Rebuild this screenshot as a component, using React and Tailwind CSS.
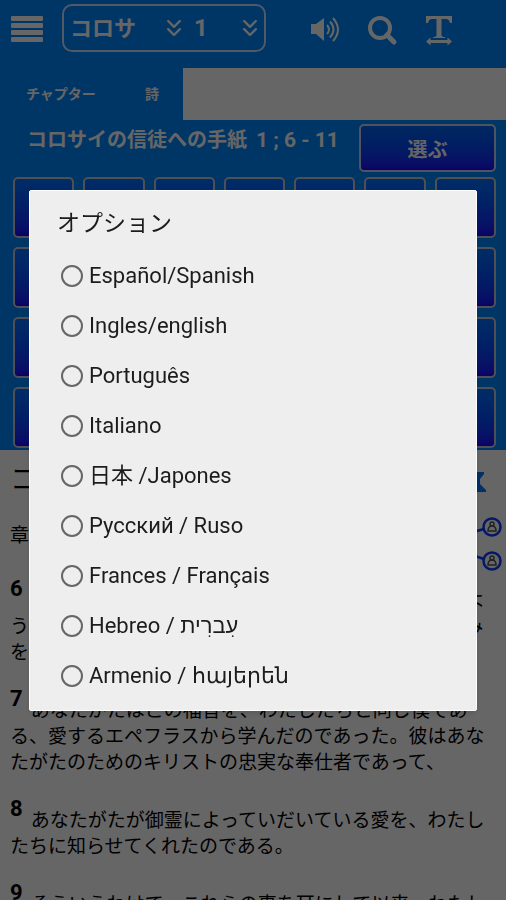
import { ChevronsDown } from "lucide-react";

const LANGUAGES = [
  "Español/Spanish",
  "Ingles/english",
  "Português",
  "Italiano",
  "日本 /Japones",
  "Русский / Ruso",
  "Frances / Français",
  "Hebreo / עִברִית",
  "Armenio / հայերեն",
];

const VERSES = [
  { n: 6, text: "そして、この福音は、世界中いたる所でそうであるように、あなたがたのところでも、これを聞いて神の恵みを知ったとき以来、実を結んで成長している。" },
  { n: 7, text: "あなたがたはこの福音を、わたしたちと同じ僕である、愛するエペフラスから学んだのであった。彼はあなたがたのためのキリストの忠実な奉仕者であって、" },
  { n: 8, text: "あなたがたが御霊によっていだいている愛を、わたしたちに知らせてくれたのである。" },
  { n: 9, text: "そういうわけで、これらの事を耳にして以来、わたし" },
];

const CELLS = Array.from({ length: 28 }, (_, i) => i + 1);

function Header() {
  return (
    <header className="flex h-[68px] items-start pl-[11px] text-white">
      <button aria-label="Menu" className="mt-4 flex w-8 flex-col gap-[2px]">
        <span className="h-[5px] rounded-[1px] bg-white" />
        <span className="h-[5px] rounded-[1px] bg-white" />
        <span className="h-[5px] rounded-[1px] bg-white" />
        <span className="h-[5px] rounded-[1px] bg-white" />
      </button>
      <div className="mt-1 ml-[19px] flex h-12 w-[204px] items-center rounded-[10px] border-2 border-[#d0dcff] pl-[6px]">
        <div className="relative flex w-[124px] items-center">
          <select aria-label="Book" className="w-full appearance-none bg-transparent text-[22px] font-bold outline-none">
            <option>コロサ</option>
          </select>
          <ChevronsDown className="pointer-events-none absolute right-[6px] size-7" strokeWidth={2} />
        </div>
        <div className="relative flex flex-1 items-center">
          <select aria-label="Chapter" className="w-full appearance-none bg-transparent text-2xl font-bold outline-none">
            <option>1</option>
          </select>
          <ChevronsDown className="pointer-events-none absolute right-0 size-7" strokeWidth={2} />
        </div>
      </div>
      <button aria-label="Listen" className="mt-4 ml-[45px]">
        <svg width="30" height="28" viewBox="0 0 30 28" fill="none" stroke="white" strokeWidth="2">
          <path d="M0 8h5l8-6v23l-8-7H0z" fill="white" stroke="none" />
          <path d="M16 9q4 4.500 0 9M19 5.500q7 8 0 16M22 2q10 11.500 0 23" />
        </svg>
      </button>
      <button aria-label="Search" className="mt-4 ml-[27px]">
        <svg width="30" height="30" viewBox="0 0 30 30" fill="none" stroke="white">
          <circle cx="12" cy="12" r="10" strokeWidth="4" />
          <path d="M19 19l7 7" strokeWidth="5" strokeLinecap="round" />
        </svg>
      </button>
      <button aria-label="Text size" className="mt-4 ml-[27px]">
        <svg width="30" height="30" viewBox="0 0 30 30" fill="white">
          <path d="M1 0h26v7h-2q-1-4-4-4h-4.500v16q0 2 3.500 2v1H8v-1q3.500 0 3.500-2V3H7Q4 3 3 7H1z" />
          <path d="M1 25.500l4.500-4v2.500h17v-2.500l4.500 4-4.500 4V27h-17v2.500z" />
        </svg>
      </button>
    </header>
  );
}

function ArticleMarks() {
  return (
    <svg width="40" height="110" viewBox="0 0 40 110" fill="none" className="shrink-0">
      <path d="M0 7h18v2l-4 5v5l6 6v2H0z" fill="#0078ff" />
      <g stroke="#0a3cff" strokeWidth="2.500">
        <path d="M4 70l7-4 7-2M4 89l8 3 6 2" />
        <circle cx="26" cy="62" r="8.500" />
        <circle cx="26" cy="96" r="8.500" />
      </g>
      <g stroke="#555" strokeWidth="1.500">
        <circle cx="26" cy="59" r="2" />
        <path d="M22 66q0-5 4-5t4 5z" />
        <circle cx="26" cy="93" r="2" />
        <path d="M22 100q0-5 4-5t4 5z" />
      </g>
    </svg>
  );
}

function OptionsDialog() {
  return (
    <div className="fixed inset-0 flex items-center justify-center bg-black/60 px-[29px]">
      <form
        role="dialog"
        aria-labelledby="options-title"
        className="w-full rounded-[2px] border border-white bg-[#eeeeee] px-[27px] pb-[9px] shadow-md"
      >
        <h2 id="options-title" className="flex h-[60px] items-center pt-2 text-[23px] text-[#1c1c1c]">オプション</h2>
        {LANGUAGES.map((name) => (
          <label key={name} className="flex h-[50px] items-center gap-[6px] pl-1 text-[22px] text-[#1c1c1c]">
            <input
              type="radio"
              name="language"
              className="size-[22px] shrink-0 appearance-none rounded-full border-2 border-[#666666] checked:border-[6px]"
            />
            <span>{name}</span>
          </label>
        ))}
      </form>
    </div>
  );
}

export default function App() {
  return (
    <div lang="ja" className="flex h-screen flex-col overflow-hidden bg-white font-[Roboto,'Noto_Sans_CJK_JP','Noto_Sans',sans-serif]">
      <div className="shrink-0 bg-[#0087ff] pb-[2px]">
        <Header />
        <nav className="flex h-[52px] text-sm font-bold text-white">
          <div className="flex w-[183px] items-center gap-[49px] pl-[26px]">
            <button>チャプター</button>
            <button>詩</button>
          </div>
          <div className="flex-1 bg-white" />
        </nav>
        <div className="flex h-[57px] items-start justify-between pt-1 pr-[10px] pl-[27px] text-white">
          <h1 className="pt-[2px] text-xl font-bold">
            コロサイの信徒への手紙 <span className="ml-1 text-[21px]">1 ; 6 - 11</span>
          </h1>
          <button className="h-12 w-[137px] rounded-[5px] border-2 border-[#c8d2f5] bg-linear-to-b from-[#0064f0] to-[#1c00ff] pt-1 text-xl font-bold">
            選ぶ
          </button>
        </div>
        <div className="grid grid-cols-7 gap-[9px] pr-[10px] pl-[13px]">
          {CELLS.map((n) => (
            <button
              key={n}
              aria-label={`${n}`}
              className="h-[61px] rounded-[5px] border-2 border-[#c8c8d2] bg-linear-to-b from-[#0070ff] to-[#1c00ff]"
            />
          ))}
        </div>
      </div>
      <main className="pr-3 pl-[10px] text-[19px] leading-[26px] text-black">
        <div className="-mr-3 flex h-32 items-start justify-between pt-[15px]">
          <div>
            <h2 className="text-[28px] leading-8">コロサイ</h2>
            <p className="mt-[26px]">章 1</p>
          </div>
          <ArticleMarks />
        </div>
        {VERSES.map((v) => (
          <p key={v.n} className="mb-[22px]">
            <span className="mr-2 align-[11px] text-[22px] leading-none font-bold">{v.n}</span>
            {v.text}
          </p>
        ))}
      </main>
      <OptionsDialog />
    </div>
  );
}
